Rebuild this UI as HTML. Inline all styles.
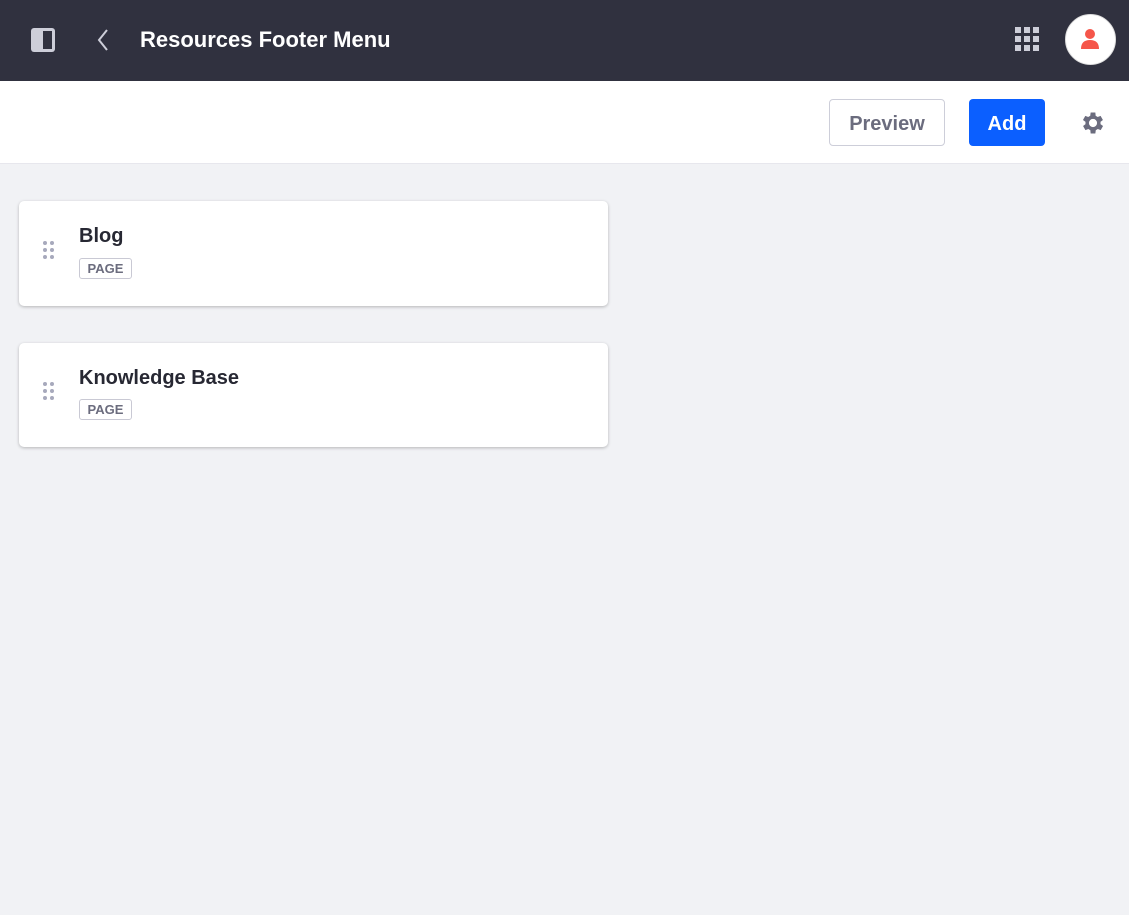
<!DOCTYPE html>
<html><head><style>
*{box-sizing:border-box;margin:0;padding:0}
body{width:1129px;height:915px;background:#f1f2f5;font-family:"Liberation Sans",sans-serif;position:relative;overflow:hidden}
.top{position:absolute;left:0;top:0;width:1129px;height:81px;background:#30313f}
.title{position:absolute;left:140px;top:27px;color:#fff;font-size:22px;font-weight:bold}
.bar{position:absolute;left:0;top:81px;width:1129px;height:83px;background:#fff;border-bottom:1px solid #e7e7ed}
.btn{position:absolute;height:47px;border-radius:4px;font-size:20px;font-weight:bold;display:flex;align-items:center;justify-content:center;padding-top:3px}
.card{position:absolute;left:19px;width:589px;background:#fff;border-radius:5px;box-shadow:0 1px 3px rgba(0,0,0,.25)}
.card h3{position:absolute;left:60px;font-size:20px;color:#272833;font-weight:bold}
.lbl{position:absolute;left:60px;width:53px;height:21px;border:1px solid #c9c9d4;border-radius:3px;font-size:13px;font-weight:bold;color:#6b6c7e;text-align:center;line-height:19px}
.dots{position:absolute;left:24px;width:12px;height:20px}
.dots i{position:absolute;width:4px;height:4px;border-radius:50%;background:#a7a9bc}
</style></head><body>
<div class="top">
<svg style="position:absolute;left:31px;top:28px" width="24" height="24"><rect x="0" y="0" width="24" height="24" rx="3" fill="#cdced9"/><rect x="12" y="3" width="9" height="18" fill="#30313f"/></svg>
<svg style="position:absolute;left:96px;top:28px" width="14" height="24"><path d="M11 2 L3 12 L11 22" stroke="#cdced9" stroke-width="2" fill="none"/></svg>
<div class="title">Resources Footer Menu</div>
<svg style="position:absolute;left:1015px;top:27px" width="25" height="25" fill="#cdced9"><rect x="0" y="0" width="6" height="6"/><rect x="9" y="0" width="6" height="6"/><rect x="18" y="0" width="6" height="6"/><rect x="0" y="9" width="6" height="6"/><rect x="9" y="9" width="6" height="6"/><rect x="18" y="9" width="6" height="6"/><rect x="0" y="18" width="6" height="6"/><rect x="9" y="18" width="6" height="6"/><rect x="18" y="18" width="6" height="6"/></svg>
<div style="position:absolute;left:1065px;top:14px;width:51px;height:51px;border-radius:50%;background:#fff;border:1px solid #ddd"></div>
<svg style="position:absolute;left:1079px;top:28px" width="22" height="22" fill="#f5564a"><circle cx="11" cy="6" r="5"/><path d="M2 21 Q2 12 11 12 Q20 12 20 21 Z"/></svg>
</div>
<div class="bar">
<div class="btn" style="left:829px;top:18px;width:116px;border:1px solid #cdced9;color:#6b6c7e">Preview</div>
<div class="btn" style="left:969px;top:18px;width:76px;background:#0b5fff;color:#fff">Add</div>
<svg style="position:absolute;left:1079px;top:28px" width="28" height="28" viewBox="0 0 24 24" fill="#6b6c7e"><path d="M19.4 13a7.5 7.5 0 0 0 0-2l2.1-1.6-2-3.5-2.5 1a7 7 0 0 0-1.7-1L15 3h-4l-.4 2.9a7 7 0 0 0-1.7 1l-2.5-1-2 3.5L6.6 11a7.5 7.5 0 0 0 0 2l-2.1 1.6 2 3.5 2.5-1a7 7 0 0 0 1.7 1L11 21h4l.4-2.9a7 7 0 0 0 1.7-1l2.5 1 2-3.5zM13 15.5a3.5 3.5 0 1 1 0-7 3.5 3.5 0 0 1 0 7z" transform="translate(-1 0)"/></svg>
</div>
<div class="card" style="top:201px;height:105px">
<div class="dots" style="top:40px"><i style="left:0;top:0"></i><i style="left:7px;top:0"></i><i style="left:0;top:7px"></i><i style="left:7px;top:7px"></i><i style="left:0;top:14px"></i><i style="left:7px;top:14px"></i></div>
<h3 style="top:24px">Blog</h3>
<div class="lbl" style="top:57px">PAGE</div>
</div>
<div class="card" style="top:343px;height:104px">
<div class="dots" style="top:39px"><i style="left:0;top:0"></i><i style="left:7px;top:0"></i><i style="left:0;top:7px"></i><i style="left:7px;top:7px"></i><i style="left:0;top:14px"></i><i style="left:7px;top:14px"></i></div>
<h3 style="top:24px">Knowledge Base</h3>
<div class="lbl" style="top:56px">PAGE</div>
</div>
</body></html>
